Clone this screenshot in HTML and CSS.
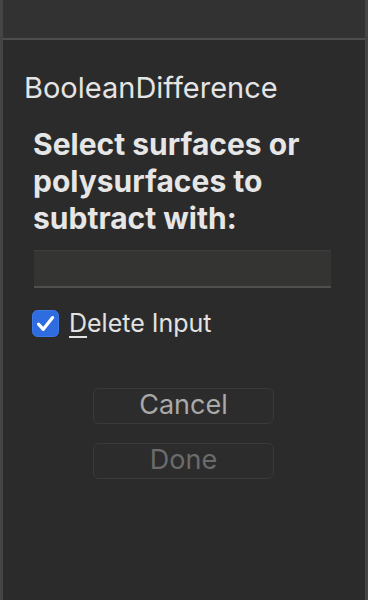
FILE: index.html
```html
<!DOCTYPE html>
<html>
<head>
<meta charset="utf-8">
<link rel="stylesheet" href="styles.css">
</head>
<body>
<div class="window">
  <div class="titlebar"></div>
  <div class="content">
    <div class="cmd-title">BooleanDifference</div>
    <div class="prompt">Select surfaces or polysurfaces to subtract with:</div>
    <div class="field"></div>
    <label class="check-row">
      <span class="checkbox">
        <svg width="27" height="27" viewBox="0 0 27 27">
          <rect x="0.5" y="0.5" width="26" height="26" rx="5" fill="#2f6ce0" stroke="#3d78e8"/>
          <path d="M6.5 14.2 L11.3 19.3 L20.6 7.6" fill="none" stroke="#ffffff" stroke-width="3.2" stroke-linecap="round" stroke-linejoin="round"/>
        </svg>
      </span>
      <span class="check-label"><span class="mnemonic">D</span>elete Input</span>
    </label>
    <div class="buttons">
      <div class="btn btn-cancel">Cancel</div>
      <div class="btn btn-done">Done</div>
    </div>
  </div>
</div>
</body>
</html>
```

FILE: styles.css
```css
html, body {
  margin: 0;
  padding: 0;
  background: #2b2b2b;
}
body {
  font-family: Inter, "Liberation Sans", Arial, sans-serif;
  color: #e2e2e2;
}
.window {
  height: 600px;
  box-sizing: border-box;
  border-left: 3px solid #454545;
  border-right: 3px solid #454545;
  background: #2b2b2b;
  display: flex;
  flex-direction: column;
}
.titlebar {
  height: 38px;
  background: #323232;
  border-bottom: 2px solid #4d4d4d;
  flex: none;
}
.content {
  display: flex;
  flex-direction: column;
  padding: 0 34px 0 21px;
}
.cmd-title {
  margin-top: 31px;
  font-size: 29px;
  line-height: 34px;
  color: #e4e4e4;
  white-space: nowrap;
}
.prompt {
  margin-top: 21px;
  margin-left: 9px;
  font-size: 30px;
  font-weight: 700;
  line-height: 37px;
  color: #e6e6e6;
  margin-right: -20px;
}
.field {
  margin-top: 13px;
  margin-left: 10px;
  height: 35px;
  background: #343432;
  border-top: 1px solid #3e3e3e;
  border-bottom: 2px solid #4f4f4f;
}
.check-row {
  margin-top: 21px;
  margin-left: 8px;
  display: flex;
  align-items: center;
  gap: 10px;
}
.checkbox {
  display: flex;
  width: 27px;
  height: 27px;
}
.check-label {
  font-size: 25px;
  line-height: 28px;
  color: #e2e2e2;
  white-space: nowrap;
}
.mnemonic {
  text-decoration: underline;
  text-underline-offset: 4px;
  text-decoration-thickness: 2px;
}
.buttons {
  margin-top: 51px;
  margin-left: 69px;
  display: flex;
  flex-direction: column;
  gap: 19px;
  width: 181px;
}
.btn {
  height: 36px;
  box-sizing: border-box;
  border: 1px solid #3a3a3a;
  border-radius: 6px;
  background: #2c2c2c;
  text-align: center;
  font-size: 27px;
  line-height: 32px;
}
.btn-cancel {
  color: #a9a9a9;
}
.btn-done {
  color: #6b6b6b;
}
```
